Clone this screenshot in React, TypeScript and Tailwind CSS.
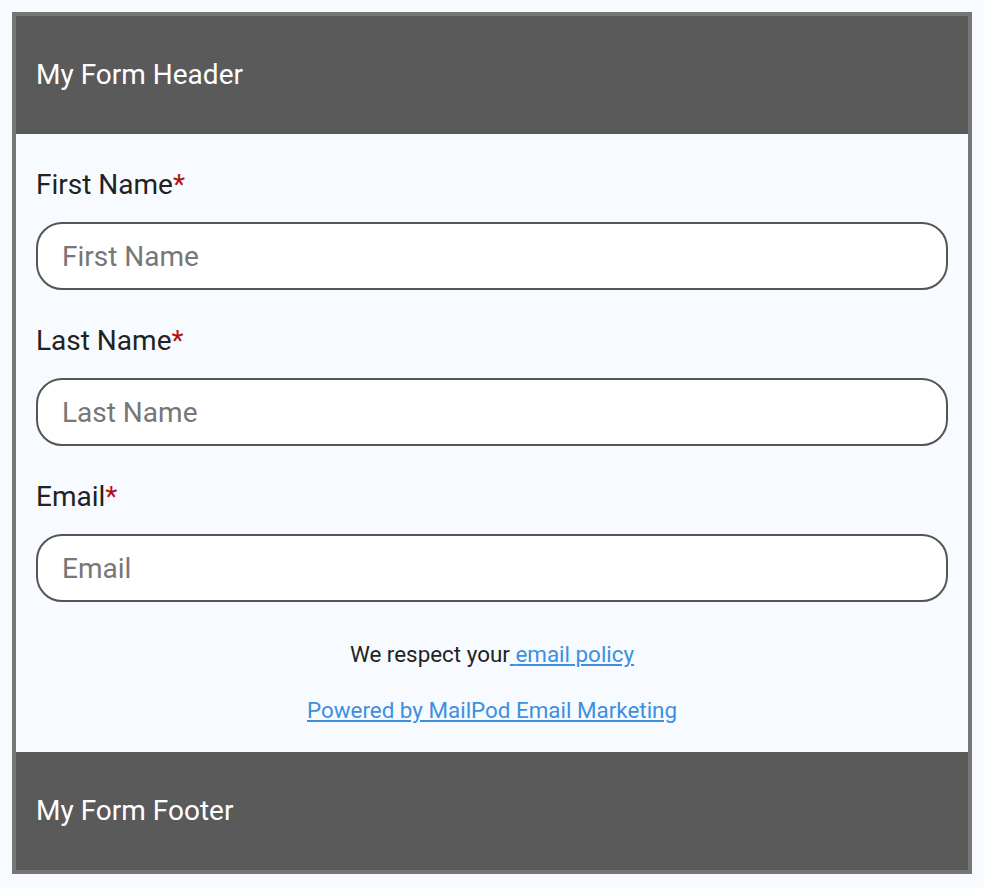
import React from 'react';

const fields = [
  { label: 'First Name', placeholder: 'First Name', type: 'text' },
  { label: 'Last Name', placeholder: 'Last Name', type: 'text' },
  { label: 'Email', placeholder: 'Email', type: 'email' },
];

export default function App() {
  return (
    <div className="min-h-[888px] bg-[#f7fbff] p-3 font-['Roboto',sans-serif]">
      <div className="border-4 border-[#767676] bg-[#f7fbff]">
        <div className="flex h-[118px] items-center bg-[#5a5a5a] px-5 text-[28px] text-white">
          My Form Header
        </div>
        <form className="flex flex-col px-5 pt-[35px] pb-[29px]">
          {fields.map((f) => (
            <div key={f.label} className="mb-[35px]">
              <label className="block text-[28px] leading-[32px] text-[#222]">
                {f.label}
                <span className="text-[#b3100f]">*</span>
              </label>
              <input
                type={f.type}
                placeholder={f.placeholder}
                className="mt-[21px] block h-[68px] w-full rounded-[26px] border-2 border-[#555] bg-white px-6 text-[28px] text-[#222] outline-none placeholder:text-[#777]"
              />
            </div>
          ))}
          <p className="mt-[4px] text-center text-[22.4px] leading-[26px] text-[#222]">
            We respect your
            <a href="#" className="text-[#3d8fe0] underline">
              {' '}email policy
            </a>
          </p>
          <p className="mt-[30px] text-center text-[22.4px] leading-[26px]">
            <a href="#" className="text-[#3d8fe0] underline">
              Powered by MailPod Email Marketing
            </a>
          </p>
        </form>
        <div className="flex h-[118px] items-center bg-[#5a5a5a] px-5 text-[28px] text-white">
          My Form Footer
        </div>
      </div>
    </div>
  );
}
